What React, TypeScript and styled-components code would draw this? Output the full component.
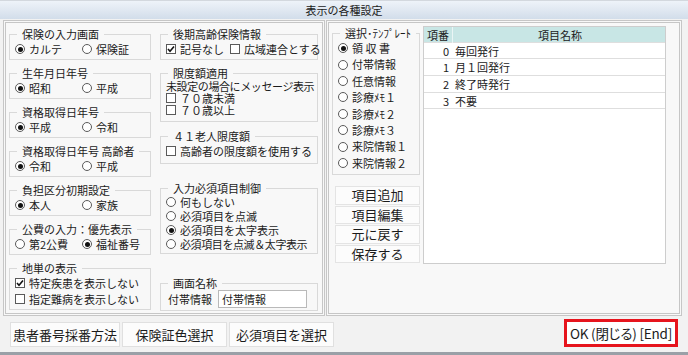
import React from 'react'
import styled, { createGlobalStyle } from 'styled-components'

const GlobalStyle = createGlobalStyle`
  html, body {
    margin: 0;
    padding: 0;
  }
  body {
    font-family: "Noto Sans CJK JP", "Noto Sans", sans-serif;
    color: #1b1b1b;
  }
`;

const Window = styled.div`
  width: 688px;
  height: 355px;
  box-sizing: border-box;
  display: flex;
  flex-direction: column;
  background: #f2f2f2;
  border-bottom: 3px solid #9aa0a7;
  font-feature-settings: "pkna";
  overflow: hidden;
`;

const TitleBar = styled.div`
  height: 19px;
  flex: none;
  box-sizing: border-box;
  border-top: 1px solid #d3d8de;
  background: linear-gradient(#eef3f9, #d2ddea);
  display: flex;
  align-items: center;
  justify-content: center;
  font-size: 11px;
`;

const Main = styled.div`
  display: flex;
  gap: 1px;
  padding: 1px 6px 0 3px;
`;

const Panel = styled.div<{ $w: number }>`
  width: ${p => p.$w}px;
  height: 296px;
  box-sizing: border-box;
  border: 3px double #c6c6c6;
  background: #f8f8f8;
  display: flex;
`;

const LeftInner = styled.div`
  display: flex;
  gap: 9px;
  padding: 4px 4px 0 3px;
`;

const Column = styled.div<{ $w: number }>`
  width: ${p => p.$w}px;
  display: flex;
  flex-direction: column;
`;

const StackCol = styled(Column)`
  gap: 6px;
`;

const Group = styled.fieldset<{ $mt?: number; $pb?: number }>`
  margin: ${p => p.$mt ?? 0}px 0 0 0;
  padding: 0 4px ${p => p.$pb ?? 2}px 5px;
  border: 1px solid #d9d9d9;
  min-width: 0;
`;

const Legend = styled.legend`
  font-size: 11px;
  line-height: 14px;
  padding: 0 5px;
  margin-left: 2px;
  white-space: nowrap;
`;

const Row = styled.div<{ $h?: number; $tight?: boolean }>`
  display: flex;
  align-items: center;
  height: ${p => p.$h ?? 16}px;
  line-height: ${p => p.$h ?? 16}px;
  font-size: 11px;
  white-space: nowrap;
  letter-spacing: ${p => (p.$tight ? '-0.4px' : 'normal')};
`;

const Option = styled.span<{ $w?: number }>`
  display: inline-flex;
  align-items: center;
  gap: 4px;
  width: ${p => (p.$w ? `${p.$w}px` : 'auto')};
  margin-right: ${p => (p.$w ? 0 : 6)}px;
`;

const RadioMark = styled.span<{ $on?: boolean }>`
  position: relative;
  flex: none;
  width: 10px;
  height: 10px;
  box-sizing: border-box;
  border-radius: 50%;
  border: 1px solid #5a5a5a;
  background: #fff;
  &::after {
    content: '';
    display: ${p => (p.$on ? 'block' : 'none')};
    position: absolute;
    inset: 1.5px;
    border-radius: 50%;
    background: #111;
  }
`;

const BoxMark = styled.span`
  flex: none;
  width: 10px;
  height: 10px;
  box-sizing: border-box;
  border: 1px solid #5a5a5a;
  background: #fff;
  display: inline-flex;
  align-items: center;
  justify-content: center;
`;

const NameField = styled.div`
  display: flex;
  align-items: center;
  gap: 6px;
  height: 18px;
  font-size: 11px;
  padding-left: 2px;
`;

const TextBox = styled.div`
  width: 89px;
  height: 18px;
  box-sizing: border-box;
  border: 1px solid #b9b9b9;
  background: #fff;
  padding-left: 3px;
  line-height: 16px;
`;

const RightInner = styled.div`
  display: flex;
  gap: 3px;
  padding: 3px 0 0 3px;
`;

const SideCol = styled.div`
  width: 88px;
  display: flex;
  flex-direction: column;
`;

const SideButtons = styled.div`
  display: flex;
  flex-direction: column;
  gap: 1px;
  margin: 11px 0 0 3px;
`;

const SideButton = styled.button`
  width: 85px;
  height: 18.5px;
  padding: 0;
  border: 1px solid #e4e4e4;
  background: #fcfcfc;
  font-family: inherit;
  font-feature-settings: inherit;
  font-size: 13px;
  line-height: 16px;
  color: #1b1b1b;
`;

const Grid = styled.div`
  width: 243px;
  height: 238px;
  box-sizing: border-box;
  border: 1px solid #cdcdcd;
  background: #fff;
  font-size: 11px;
`;

const GridRow = styled.div<{ $head?: boolean }>`
  display: grid;
  grid-template-columns: 29px 1fr;
  height: ${p => (p.$head ? 15.5 : 16.7)}px;
  box-sizing: border-box;
  border-bottom: 1px solid #dedede;
  background: ${p => (p.$head ? '#c8e6e5' : '#fff')};
  align-items: center;
`;

const NumCell = styled.div<{ $head?: boolean }>`
  height: 100%;
  display: flex;
  align-items: center;
  justify-content: ${p => (p.$head ? 'center' : 'flex-end')};
  padding-right: ${p => (p.$head ? 0 : 3)}px;
  border-right: 1px solid ${p => (p.$head ? '#eaf5f5' : 'transparent')};
`;

const NameCell = styled.div<{ $head?: boolean }>`
  text-align: ${p => (p.$head ? 'center' : 'left')};
  padding-left: 2px;
`;

const Footer = styled.div`
  flex: 1;
  display: flex;
  align-items: flex-start;
  justify-content: space-between;
  padding: 3px 10px 0 10px;
`;

const FooterButtons = styled.div`
  display: flex;
  gap: 2px;
  margin-top: 3px;
`;

const FooterButton = styled.button<{ $w: number }>`
  width: ${p => p.$w}px;
  height: 25px;
  padding: 0;
  border: 1px solid #e0e0e0;
  background: #fcfcfc;
  font-family: inherit;
  font-feature-settings: inherit;
  font-size: 13px;
  color: #1b1b1b;
`;

const OkButton = styled.button`
  width: 114px;
  height: 28px;
  padding: 0;
  border: 3px solid #e6141d;
  background: #fff;
  font-family: inherit;
  font-feature-settings: "palt";
  font-size: 13.5px;
  letter-spacing: -0.2px;
  white-space: nowrap;
  color: #1b1b1b;
`;

const Radio = ({ on, label, w }: { on?: boolean; label: string; w?: number }) => (
  <Option $w={w}>
    <RadioMark $on={on} />
    {label}
  </Option>
)

const Check = ({ on, label }: { on?: boolean; label: string }) => (
  <Option>
    <BoxMark>
      {on && (
        <svg width="8" height="8" viewBox="0 0 8 8">
          <polyline points="1,4 3,6.2 7,1.5" fill="none" stroke="#111" strokeWidth="1.6" />
        </svg>
      )}
    </BoxMark>
    {label}
  </Option>
)

const Pair = ({ legend, a, b, first = true }: { legend: string; a: string; b: string; first?: boolean }) => (
  <Group>
    <Legend>{legend}</Legend>
    <Row>
      <Radio on={first} label={a} w={67} />
      <Radio on={!first} label={b} />
    </Row>
  </Group>
)

const templates = ['領 収 書', '付帯情報', '任意情報', '診療ﾒﾓ１', '診療ﾒﾓ２', '診療ﾒﾓ３', '来院情報１', '来院情報２']
const items = ['毎回発行', '月１回発行', '終了時発行', '不要']

export default function App() {
  return (
    <Window>
      <GlobalStyle />
      <TitleBar>表示の各種設定</TitleBar>
      <Main>
        <Panel $w={322}>
          <LeftInner>
            <StackCol $w={142}>
              <Pair legend="保険の入力画面" a="カルテ" b="保険証" />
              <Pair legend="生年月日年号" a="昭和" b="平成" />
              <Pair legend="資格取得日年号" a="平成" b="令和" />
              <Pair legend="資格取得日年号 高齢者" a="令和" b="平成" />
              <Pair legend="負担区分初期設定" a="本人" b="家族" />
              <Pair legend="公費の入力：優先表示" a="第2公費" b="福祉番号" first={false} />
              <Group>
                <Legend>地単の表示</Legend>
                <Row><Check on label="特定疾患を表示しない" /></Row>
                <Row><Check label="指定難病を表示しない" /></Row>
              </Group>
            </StackCol>
            <Column $w={158}>
              <Group>
                <Legend>後期高齢保険情報</Legend>
                <Row>
                  <Check on label="記号なし" />
                  <Check label="広域連合とする" />
                </Row>
              </Group>
              <Group $mt={6} $pb={5}>
                <Legend>限度額適用</Legend>
                <Row $h={12} $tight>未設定の場合にメッセージ表示</Row>
                <Row $h={12}><Check label="７０歳未満" /></Row>
                <Row $h={12}><Check label="７０歳以上" /></Row>
              </Group>
              <Group $mt={7} $pb={4}>
                <Legend>４１老人限度額</Legend>
                <Row><Check label="高齢者の限度額を使用する" /></Row>
              </Group>
              <Group $mt={17}>
                <Legend>入力必須項目制御</Legend>
                <Row $h={14}><Radio label="何もしない" /></Row>
                <Row $h={14}><Radio label="必須項目を点滅" /></Row>
                <Row $h={14}><Radio on label="必須項目を太字表示" /></Row>
                <Row $h={14} $tight><Radio label="必須項目を点滅＆太字表示" /></Row>
              </Group>
              <Group $mt={22}>
                <Legend>画面名称</Legend>
                <NameField>
                  付帯情報
                  <TextBox>付帯情報</TextBox>
                </NameField>
              </Group>
            </Column>
          </LeftInner>
        </Panel>
        <Panel $w={356}>
          <RightInner>
            <SideCol>
              <Group $pb={3}>
                <Legend>選択･ﾃﾝﾌﾟﾚｰﾄ</Legend>
                {templates.map((t, i) => (
                  <Row key={t} $h={16.4}><Radio on={i === 0} label={t} /></Row>
                ))}
              </Group>
              <SideButtons>
                <SideButton>項目追加</SideButton>
                <SideButton>項目編集</SideButton>
                <SideButton>元に戻す</SideButton>
                <SideButton>保存する</SideButton>
              </SideButtons>
            </SideCol>
            <Grid>
              <GridRow $head>
                <NumCell $head>項番</NumCell>
                <NameCell $head>項目名称</NameCell>
              </GridRow>
              {items.map((t, i) => (
                <GridRow key={t}>
                  <NumCell>{i}</NumCell>
                  <NameCell>{t}</NameCell>
                </GridRow>
              ))}
            </Grid>
          </RightInner>
        </Panel>
      </Main>
      <Footer>
        <FooterButtons>
          <FooterButton $w={110}>患者番号採番方法</FooterButton>
          <FooterButton $w={105}>保険証色選択</FooterButton>
          <FooterButton $w={105}>必須項目を選択</FooterButton>
        </FooterButtons>
        <OkButton>OK (閉じる) [End]</OkButton>
      </Footer>
    </Window>
  )
}
